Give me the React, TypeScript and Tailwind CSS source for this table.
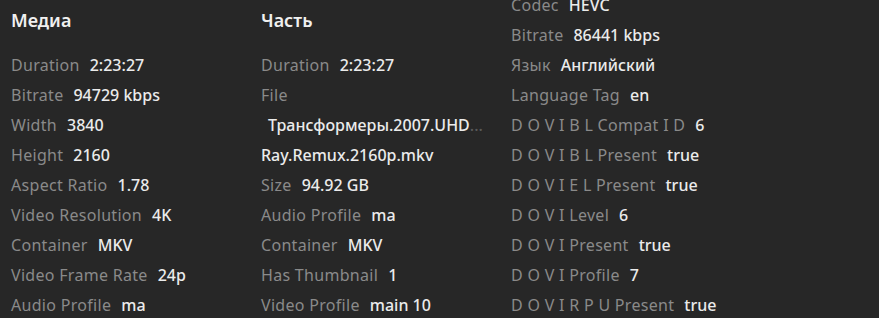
import React from "react";

type Row = { l: string; v?: string };

const col1: Row[] = [
  { l: "Duration", v: "2:23:27" },
  { l: "Bitrate", v: "94729 kbps" },
  { l: "Width", v: "3840" },
  { l: "Height", v: "2160" },
  { l: "Aspect Ratio", v: "1.78" },
  { l: "Video Resolution", v: "4K" },
  { l: "Container", v: "MKV" },
  { l: "Video Frame Rate", v: "24p" },
  { l: "Audio Profile", v: "ma" },
];

const col2a: Row[] = [
  { l: "Duration", v: "2:23:27" },
  { l: "File" },
];

const col2b: Row[] = [
  { l: "Size", v: "94.92 GB" },
  { l: "Audio Profile", v: "ma" },
  { l: "Container", v: "MKV" },
  { l: "Has Thumbnail", v: "1" },
  { l: "Video Profile", v: "main 10" },
];

const col3: Row[] = [
  { l: "Codec", v: "HEVC" },
  { l: "Bitrate", v: "86441 kbps" },
  { l: "Язык", v: "Английский" },
  { l: "Language Tag", v: "en" },
  { l: "D O V I B L Compat I D", v: "6" },
  { l: "D O V I B L Present", v: "true" },
  { l: "D O V I E L Present", v: "true" },
  { l: "D O V I Level", v: "6" },
  { l: "D O V I Present", v: "true" },
  { l: "D O V I Profile", v: "7" },
  { l: "D O V I R P U Present", v: "true" },
];

function Line({ r }: { r: Row }) {
  return (
    <div className="h-[30px] flex items-center whitespace-nowrap">
      <span className="text-[#8a8a8a] tracking-[0.3px]">{r.l}</span>
      {r.v && <span className="ml-[10px] text-[#ebebeb] font-medium">{r.v}</span>}
    </div>
  );
}

export default function App() {
  return (
    <div
      className="w-[879px] h-[318px] overflow-hidden bg-[#272727] flex text-[16px]"
      style={{ fontFamily: '"Noto Sans", "Open Sans", sans-serif' }}
    >
      <div className="w-[250px] pl-[11px] shrink-0">
        <div className="h-[40px] flex items-center text-[18px] font-semibold text-[#f0f0f0] mb-[10px]">Медиа</div>
        {col1.map((r, i) => (
          <Line key={i} r={r} />
        ))}
      </div>
      <div className="w-[250px] pl-[11px] shrink-0">
        <div className="h-[40px] flex items-center text-[18px] font-semibold text-[#f0f0f0] mb-[10px]">Часть</div>
        {col2a.map((r, i) => (
          <Line key={i} r={r} />
        ))}
        <div className="h-[30px] flex items-center whitespace-nowrap text-[#ebebeb] font-medium pl-[7px]">
          <span>Трансформеры.2007.UHD</span>
          <span className="text-[#5a5a5a]">...</span>
        </div>
        <div className="h-[30px] flex items-center whitespace-nowrap text-[#ebebeb] font-medium">Ray.Remux.2160p.mkv</div>
        {col2b.map((r, i) => (
          <Line key={i} r={r} />
        ))}
      </div>
      <div className="w-[250px] pl-[11px] shrink-0 mt-[-10px]">
        {col3.map((r, i) => (
          <Line key={i} r={r} />
        ))}
      </div>
    </div>
  );
}
